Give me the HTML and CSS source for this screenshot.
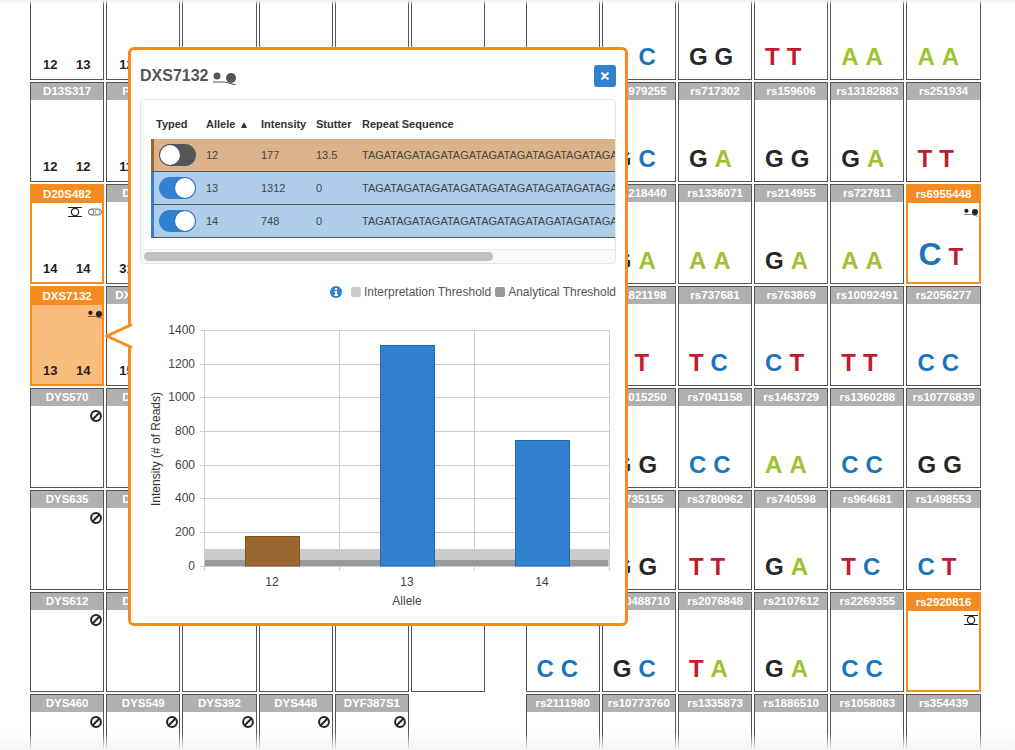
FILE: index.html
```html
<!DOCTYPE html>
<html lang="en">
<head>
<meta charset="utf-8">
<title>Genotype detail</title>
<link rel="stylesheet" href="styles.css">
</head>
<body>
<svg class="defs" aria-hidden="true">
  <symbol id="dots" viewBox="0 0 23 14"><circle cx="4" cy="5" r="3.5" fill="currentColor"/><circle cx="18" cy="7" r="5" fill="currentColor"/><path d="M0 11h12l11 3" fill="none" stroke="currentColor" stroke-width="1"/></symbol>
  <symbol id="ring" viewBox="0 0 14 10"><path d="M0 .5h14M0 9.5h14" stroke="currentColor" fill="none"/><circle cx="7" cy="5" r="3.7" fill="none" stroke="currentColor" stroke-width="1.2"/></symbol>
  <symbol id="pill" viewBox="0 0 14 8"><rect x=".5" y="1" width="13" height="6" rx="3" fill="none" stroke="#777"/><circle cx="3.2" cy="4" r="2.7" fill="#fff" stroke="#555" stroke-width=".8"/><circle cx="9.5" cy="4" r="2.4" fill="none" stroke="#888" stroke-width=".8"/></symbol>
  <symbol id="ban" viewBox="0 0 12 12"><circle cx="6" cy="6" r="4.9" fill="none" stroke="currentColor" stroke-width="2"/><path d="M2.8 9.2 9.2 2.8" stroke="currentColor" stroke-width="2"/></symbol>
</svg>

<main class="board">
  <section class="group">
    <div class="cell"><div class="name"></div><div class="body"><div class="strs"><span>12</span><span>13</span></div></div></div>
    <div class="cell"><div class="name"></div><div class="body"><div class="strs"><span>12</span></div></div></div>
    <div class="cell"><div class="name"></div><div class="body"></div></div>
    <div class="cell"><div class="name"></div><div class="body"></div></div>
    <div class="cell"><div class="name"></div><div class="body"></div></div>
    <div class="cell"><div class="name"></div><div class="body"></div></div>

    <div class="cell"><div class="name">D13S317</div><div class="body"><div class="strs"><span>12</span><span>12</span></div></div></div>
    <div class="cell"><div class="name name-start">P</div><div class="body"><div class="strs"><span>11</span></div></div></div>
    <div class="cell"><div class="name"></div><div class="body"></div></div>
    <div class="cell"><div class="name"></div><div class="body"></div></div>
    <div class="cell"><div class="name"></div><div class="body"></div></div>
    <div class="cell"><div class="name"></div><div class="body"></div></div>

    <div class="cell selected"><div class="name">D20S482</div><div class="body"><div class="marks"><svg class="mark-wide"><use href="#ring"/></svg><svg class="mark-wide"><use href="#pill"/></svg></div><div class="strs"><span>14</span><span>14</span></div></div></div>
    <div class="cell"><div class="name name-start">D</div><div class="body"><div class="strs"><span>31</span></div></div></div>
    <div class="cell"><div class="name"></div><div class="body"></div></div>
    <div class="cell"><div class="name"></div><div class="body"></div></div>
    <div class="cell"><div class="name"></div><div class="body"></div></div>
    <div class="cell"><div class="name"></div><div class="body"></div></div>

    <div class="cell selected active"><div class="name">DXS7132</div><div class="body"><div class="marks"><svg class="mark-wide"><use href="#dots"/></svg></div><div class="strs"><span>13</span><span>14</span></div></div></div>
    <div class="cell"><div class="name name-start name-long">DX</div><div class="body"><div class="strs"><span>15</span></div></div></div>
    <div class="cell"><div class="name"></div><div class="body"></div></div>
    <div class="cell"><div class="name"></div><div class="body"></div></div>
    <div class="cell"><div class="name"></div><div class="body"></div></div>
    <div class="cell"><div class="name"></div><div class="body"></div></div>

    <div class="cell"><div class="name">DYS570</div><div class="body"><div class="marks"><svg class="mark-ban"><use href="#ban"/></svg></div></div></div>
    <div class="cell"><div class="name name-start">D</div><div class="body"></div></div>
    <div class="cell"><div class="name"></div><div class="body"></div></div>
    <div class="cell"><div class="name"></div><div class="body"></div></div>
    <div class="cell"><div class="name"></div><div class="body"></div></div>
    <div class="cell"><div class="name"></div><div class="body"></div></div>

    <div class="cell"><div class="name">DYS635</div><div class="body"><div class="marks"><svg class="mark-ban"><use href="#ban"/></svg></div></div></div>
    <div class="cell"><div class="name name-start">D</div><div class="body"></div></div>
    <div class="cell"><div class="name"></div><div class="body"></div></div>
    <div class="cell"><div class="name"></div><div class="body"></div></div>
    <div class="cell"><div class="name"></div><div class="body"></div></div>
    <div class="cell"><div class="name"></div><div class="body"></div></div>

    <div class="cell"><div class="name">DYS612</div><div class="body"><div class="marks"><svg class="mark-ban"><use href="#ban"/></svg></div></div></div>
    <div class="cell"><div class="name name-start">D</div><div class="body"></div></div>
    <div class="cell"><div class="name"></div><div class="body"></div></div>
    <div class="cell"><div class="name"></div><div class="body"></div></div>
    <div class="cell"><div class="name"></div><div class="body"></div></div>
    <div class="cell"><div class="name"></div><div class="body"></div></div>

    <div class="cell"><div class="name">DYS460</div><div class="body"><div class="marks"><svg class="mark-ban"><use href="#ban"/></svg></div></div></div>
    <div class="cell"><div class="name">DYS549</div><div class="body"><div class="marks"><svg class="mark-ban"><use href="#ban"/></svg></div></div></div>
    <div class="cell"><div class="name">DYS392</div><div class="body"><div class="marks"><svg class="mark-ban"><use href="#ban"/></svg></div></div></div>
    <div class="cell"><div class="name">DYS448</div><div class="body"><div class="marks"><svg class="mark-ban"><use href="#ban"/></svg></div></div></div>
    <div class="cell"><div class="name">DYF387S1</div><div class="body"><div class="marks"><svg class="mark-ban"><use href="#ban"/></svg></div></div></div>
  </section>

  <section class="group">
    <div class="cell"><div class="name"></div><div class="body"></div></div>
    <div class="cell"><div class="name"></div><div class="body"><div class="snps"><b class="g ghost">G</b><b class="c">C</b></div></div></div>
    <div class="cell"><div class="name"></div><div class="body"><div class="snps"><b class="g">G</b><b class="g">G</b></div></div></div>
    <div class="cell"><div class="name"></div><div class="body"><div class="snps"><b class="t">T</b><b class="t">T</b></div></div></div>
    <div class="cell"><div class="name"></div><div class="body"><div class="snps"><b class="a">A</b><b class="a">A</b></div></div></div>
    <div class="cell"><div class="name"></div><div class="body"><div class="snps"><b class="a">A</b><b class="a">A</b></div></div></div>

    <div class="cell"><div class="name"></div><div class="body"></div></div>
    <div class="cell"><div class="name">rs1979255</div><div class="body"><div class="snps"><b class="g">G</b><b class="c">C</b></div></div></div>
    <div class="cell"><div class="name">rs717302</div><div class="body"><div class="snps"><b class="g">G</b><b class="a">A</b></div></div></div>
    <div class="cell"><div class="name">rs159606</div><div class="body"><div class="snps"><b class="g">G</b><b class="g">G</b></div></div></div>
    <div class="cell"><div class="name">rs13182883</div><div class="body"><div class="snps"><b class="g">G</b><b class="a">A</b></div></div></div>
    <div class="cell"><div class="name">rs251934</div><div class="body"><div class="snps"><b class="t">T</b><b class="t">T</b></div></div></div>

    <div class="cell"><div class="name"></div><div class="body"></div></div>
    <div class="cell"><div class="name">rs3218440</div><div class="body"><div class="snps"><b class="g">G</b><b class="a">A</b></div></div></div>
    <div class="cell"><div class="name">rs1336071</div><div class="body"><div class="snps"><b class="a">A</b><b class="a">A</b></div></div></div>
    <div class="cell"><div class="name">rs214955</div><div class="body"><div class="snps"><b class="g">G</b><b class="a">A</b></div></div></div>
    <div class="cell"><div class="name">rs727811</div><div class="body"><div class="snps"><b class="a">A</b><b class="a">A</b></div></div></div>
    <div class="cell selected"><div class="name">rs6955448</div><div class="body"><div class="marks"><svg class="mark-wide"><use href="#dots"/></svg></div><div class="snps snps-strong"><b class="c big">C</b><b class="t">T</b></div></div></div>

    <div class="cell"><div class="name"></div><div class="body"></div></div>
    <div class="cell"><div class="name">rs1821198</div><div class="body"><div class="snps"><b class="t">T</b><b class="t">T</b></div></div></div>
    <div class="cell"><div class="name">rs737681</div><div class="body"><div class="snps"><b class="t">T</b><b class="c">C</b></div></div></div>
    <div class="cell"><div class="name">rs763869</div><div class="body"><div class="snps"><b class="c">C</b><b class="t">T</b></div></div></div>
    <div class="cell"><div class="name">rs10092491</div><div class="body"><div class="snps"><b class="t">T</b><b class="t">T</b></div></div></div>
    <div class="cell"><div class="name">rs2056277</div><div class="body"><div class="snps"><b class="c">C</b><b class="c">C</b></div></div></div>

    <div class="cell"><div class="name"></div><div class="body"></div></div>
    <div class="cell"><div class="name">rs1015250</div><div class="body"><div class="snps"><b class="g">G</b><b class="g">G</b></div></div></div>
    <div class="cell"><div class="name">rs7041158</div><div class="body"><div class="snps"><b class="c">C</b><b class="c">C</b></div></div></div>
    <div class="cell"><div class="name">rs1463729</div><div class="body"><div class="snps"><b class="a">A</b><b class="a">A</b></div></div></div>
    <div class="cell"><div class="name">rs1360288</div><div class="body"><div class="snps"><b class="c">C</b><b class="c">C</b></div></div></div>
    <div class="cell"><div class="name">rs10776839</div><div class="body"><div class="snps"><b class="g">G</b><b class="g">G</b></div></div></div>

    <div class="cell"><div class="name"></div><div class="body"></div></div>
    <div class="cell"><div class="name">rs735155</div><div class="body"><div class="snps"><b class="g">G</b><b class="g">G</b></div></div></div>
    <div class="cell"><div class="name">rs3780962</div><div class="body"><div class="snps"><b class="t">T</b><b class="t">T</b></div></div></div>
    <div class="cell"><div class="name">rs740598</div><div class="body"><div class="snps"><b class="g">G</b><b class="a">A</b></div></div></div>
    <div class="cell"><div class="name">rs964681</div><div class="body"><div class="snps"><b class="t">T</b><b class="c">C</b></div></div></div>
    <div class="cell"><div class="name">rs1498553</div><div class="body"><div class="snps"><b class="c">C</b><b class="t">T</b></div></div></div>

    <div class="cell"><div class="name"></div><div class="body"><div class="snps"><b class="c">C</b><b class="c">C</b></div></div></div>
    <div class="cell"><div class="name">rs10488710</div><div class="body"><div class="snps"><b class="g">G</b><b class="c">C</b></div></div></div>
    <div class="cell"><div class="name">rs2076848</div><div class="body"><div class="snps"><b class="t">T</b><b class="a">A</b></div></div></div>
    <div class="cell"><div class="name">rs2107612</div><div class="body"><div class="snps"><b class="g">G</b><b class="a">A</b></div></div></div>
    <div class="cell"><div class="name">rs2269355</div><div class="body"><div class="snps"><b class="c">C</b><b class="c">C</b></div></div></div>
    <div class="cell selected"><div class="name">rs2920816</div><div class="body"><div class="marks"><svg class="mark-wide"><use href="#ring"/></svg></div></div></div>

    <div class="cell"><div class="name">rs2111980</div><div class="body"></div></div>
    <div class="cell"><div class="name">rs10773760</div><div class="body"></div></div>
    <div class="cell"><div class="name">rs1335873</div><div class="body"></div></div>
    <div class="cell"><div class="name">rs1886510</div><div class="body"></div></div>
    <div class="cell"><div class="name">rs1058083</div><div class="body"></div></div>
    <div class="cell"><div class="name">rs354439</div><div class="body"></div></div>
  </section>
</main>

<div class="fade-top"></div>
<div class="fade-bottom"></div>

<aside class="popover">
  <svg class="pointer" viewBox="0 0 28 26" aria-hidden="true"><path d="M27 1.5 2 13l25 11.5" fill="#fff" stroke="#f68b1f" stroke-width="3"/></svg>
  <header class="pop-head">
    <h2 class="pop-title">DXS7132 <svg class="title-icon"><use href="#dots"/></svg></h2>
    <button class="close" type="button" aria-label="Close"><svg viewBox="0 0 10 10"><path d="M1.5 1.5l7 7M8.5 1.5l-7 7" stroke="#fff" stroke-width="2.8" stroke-linecap="round"/></svg></button>
  </header>
  <div class="panel">
    <div class="table-clip">
      <table class="alleles">
        <thead><tr><th class="col-a">Typed</th><th class="col-b">Allele <i class="sort"></i></th><th class="col-c">Intensity</th><th class="col-d">Stutter</th><th>Repeat Sequence</th></tr></thead>
        <tbody>
          <tr class="row-stutter"><td><span class="toggle off"></span></td><td>12</td><td>177</td><td>13.5</td><td>TAGATAGATAGATAGATAGATAGATAGATAGATAGATAGATAGATAGATAGATAGATAGA</td></tr>
          <tr class="row-typed"><td><span class="toggle on"></span></td><td>13</td><td>1312</td><td>0</td><td>TAGATAGATAGATAGATAGATAGATAGATAGATAGATAGATAGATAGATAGATAGATAGA</td></tr>
          <tr class="row-typed"><td><span class="toggle on"></span></td><td>14</td><td>748</td><td>0</td><td>TAGATAGATAGATAGATAGATAGATAGATAGATAGATAGATAGATAGATAGATAGATAGA</td></tr>
        </tbody>
      </table>
    </div>
    <div class="scrollbar"><div class="thumb"></div></div>
  </div>
  <div class="legend">
    <svg class="info" viewBox="0 0 12 12" aria-hidden="true"><circle cx="6" cy="6" r="6" fill="#3181d0"/><rect x="5" y="2" width="2.2" height="2" fill="#fff"/><path d="M4.2 5h3v3.6h.8V10H4.2V8.6H5V6.3h-.8z" fill="#fff"/></svg>
    <span class="swatch swatch-light"></span><span class="legend-text">Interpretation Threshold</span>
    <span class="swatch swatch-dark"></span><span class="legend-text">Analytical Threshold</span>
  </div>
  <svg class="chart" viewBox="140 310 476 300" role="img" aria-label="Intensity by allele">
    <g class="grid">
      <path d="M200 330.5H609M200 364.5H609M200 397.5H609M200 431.5H609M200 465.5H609M200 498.5H609M200 532.5H609M200 566.5H609"/>
      <path d="M204.5 330V571M339.5 330V571M474.5 330V571M609.5 330V571"/>
    </g>
    <rect class="band-light" x="205" y="549" width="404" height="17"/>
    <rect class="band-dark" x="205" y="560" width="403" height="6"/>
    <rect class="bar-brown" x="245.5" y="536.5" width="54" height="29.5"/>
    <rect class="bar-blue" x="380.5" y="345.5" width="54" height="220.5"/>
    <rect class="bar-blue" x="515.5" y="440.5" width="54" height="125.5"/>
    <g class="ticks-y">
      <text x="195" y="334">1400</text><text x="195" y="368">1200</text><text x="195" y="401">1000</text><text x="195" y="435">800</text><text x="195" y="469">600</text><text x="195" y="502">400</text><text x="195" y="536">200</text><text x="195" y="570">0</text>
    </g>
    <g class="ticks-x">
      <text x="272" y="586">12</text><text x="407" y="586">13</text><text x="542" y="586">14</text>
      <text x="407" y="605">Allele</text>
    </g>
    <text class="axis-y" transform="translate(160 449) rotate(-90)">Intensity (# of Reads)</text>
  </svg>
</aside>
</body>
</html>
```

FILE: styles.css
```css
* { box-sizing: border-box; }
html, body { margin: 0; height: 750px; overflow: hidden; background: #fff; }
body { font-family: "Liberation Sans", Arial, sans-serif; color: #444; position: relative; }
.defs { position: absolute; width: 0; height: 0; }

.board { display: flex; gap: 40.4px; margin-top: -20px; padding-left: 30px; height: 770px; overflow: hidden; }
.group { display: grid; grid-template-columns: repeat(6, 74.2px); grid-auto-rows: 100px; gap: 2px; flex: none; }

.cell { display: flex; flex-direction: column; border: 1px solid #555; background: #fff; min-width: 0; }
.name { height: 17px; line-height: 17px; background: #b0b0b0; color: #fff; font-size: 11.5px; font-weight: 700; text-align: center; white-space: nowrap; overflow: hidden; flex: none; }
.name-start { text-align: left; padding-left: 15px; }
.name-long { padding-left: 8px; }
.body { flex: 1; display: flex; flex-direction: column; min-height: 0; }
.marks { display: flex; justify-content: flex-end; align-items: center; gap: 6px; padding: 4px 1.5px 0 0; color: #222; }
.mark-wide { width: 14px; height: 10px; display: block; }
.mark-ban { width: 12px; height: 12px; display: block; }

.strs { margin-top: auto; display: flex; gap: 18.6px; padding: 0 0 8px 12px; font-size: 13px; line-height: 13px; font-weight: 700; color: #222; }
.snps { margin-top: auto; display: flex; align-items: baseline; gap: 7px; padding: 0 0 10px 10px; font-size: 24px; line-height: 24px; }
.snps b { display: block; font-weight: 700; }
.snps .a { color: #9dc232; }
.snps .c { color: #1a75bb; }
.snps .g { color: #262626; }
.snps .t { color: #c01c2e; }
.snps .big { font-size: 32px; line-height: 32px; }
.snps .ghost { visibility: hidden; }

.selected { border: 2px solid #f68b1f; }
.selected .name { background: #f68b1f; }
.selected .marks { padding-right: 0.5px; }
.selected .strs { padding-left: 11px; padding-bottom: 7px; }
.selected .snps { padding-bottom: 12px; padding-left: 10px; }
.active .body { background: #fbbd7e; }

.fade-top { position: absolute; left: 0; right: 0; top: 0; height: 5px; background: linear-gradient(#f1f1f1, rgba(255,255,255,0)); }
.fade-bottom { position: absolute; left: 0; right: 0; bottom: 0; height: 18px; background: linear-gradient(rgba(246,246,246,0), #f6f6f6); }

.popover { position: absolute; left: 128px; top: 47px; width: 500px; height: 579px; border: 3px solid #f68b1f; border-radius: 6px; background: #fff; padding: 15px 9px 0; }
.pointer { position: absolute; left: -26px; top: 273px; width: 28px; height: 26px; display: block; }

.pop-head { display: flex; justify-content: space-between; align-items: center; height: 22px; margin-bottom: 12px; }
.pop-title { margin: 0; display: flex; align-items: center; gap: 4px; font-size: 16px; line-height: 22px; font-weight: 700; color: #555; }
.title-icon { width: 23px; height: 14px; color: #555; margin-top: 4px; }
.close { width: 22px; height: 22px; padding: 7px; border: 0; border-radius: 3px; background: #3181d0; }
.close svg { display: block; width: 8px; height: 8px; }

.panel { height: 165px; border: 1px solid #e6e6e6; border-radius: 4px; display: flex; flex-direction: column; }
.table-clip { height: 149px; overflow: hidden; padding: 0 0 0 10px; flex: none; }
.alleles { border-collapse: separate; border-spacing: 0; table-layout: fixed; width: 800px; font-size: 11px; color: #444; }
.alleles th { height: 39px; padding: 9px 0 0 5px; text-align: left; font-weight: 700; color: #333; }
.alleles th:not(:first-child) { padding-left: 0; }
.col-a { width: 55px; }
.col-b { width: 55px; }
.col-c { width: 55px; }
.col-d { width: 46px; }
.alleles td { height: 33px; padding: 0; border-bottom: 1px solid #555; white-space: nowrap; overflow: hidden; }
.alleles td:first-child { padding-left: 5px; border-left: 3px solid #3181d0; }
.row-stutter td { background: #dbb38a; }
.row-stutter td:first-child { border-left-color: #9c6630; }
.row-typed td { background: #aecdeb; }
.sort { display: inline-block; margin-left: 3px; border-left: 3.5px solid transparent; border-right: 3.5px solid transparent; border-bottom: 6px solid #333; }

.toggle { display: block; position: relative; width: 37px; height: 22px; border-radius: 11px; }
.toggle::after { content: ""; position: absolute; top: 1px; width: 20px; height: 20px; border-radius: 50%; background: #fff; box-shadow: 0 0 1px rgba(0,0,0,.5); }
.toggle.off { background: #555; }
.toggle.off::after { left: 1px; }
.toggle.on { background: #3181d0; }
.toggle.on::after { right: 1px; }

.scrollbar { flex: 1; background: #f8f8f8; border-top: 1px solid #e8e8e8; padding: 2px 3px; border-radius: 0 0 4px 4px; }
.thumb { width: 349px; height: 9px; border-radius: 5px; background: #c1c1c1; }

.legend { display: flex; justify-content: flex-end; align-items: center; height: 16px; margin-top: 20px; font-size: 12px; color: #555; }
.info { width: 12px; height: 12px; margin-right: 9px; }
.swatch { width: 10px; height: 10px; border-radius: 2px; margin-right: 3px; }
.swatch-light { background: #ccc; }
.swatch-dark { background: #999; margin-left: 4px; }
.legend-text { white-space: nowrap; }

.chart { display: block; width: 476px; height: 300px; margin-top: 10px; font-family: "Liberation Sans", Arial, sans-serif; }
.grid path { fill: none; stroke: #ccc; stroke-width: 1; }
.band-light { fill: #ccc; }
.band-dark { fill: #999; }
.bar-brown { fill: #9c6630; stroke: #7f5326; stroke-width: 1; }
.bar-blue { fill: #3181d0; stroke: #2568ab; stroke-width: 1; }
.ticks-y text { font-size: 12px; fill: #444; text-anchor: end; }
.ticks-x text { font-size: 12px; fill: #444; text-anchor: middle; }
.axis-y { font-size: 12px; fill: #333; text-anchor: middle; }
```
